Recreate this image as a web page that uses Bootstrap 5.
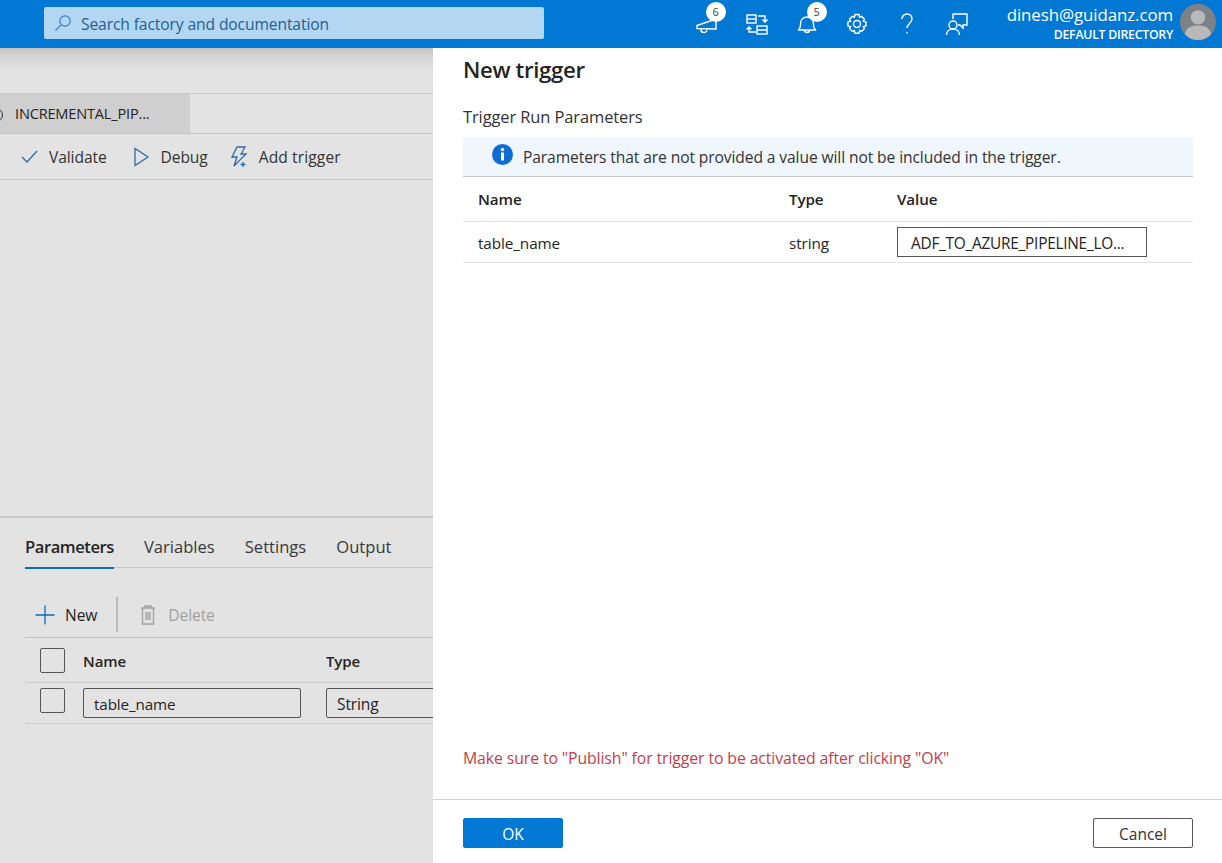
<!doctype html>
<html lang="en"><head><meta charset="utf-8"><title>New trigger</title>
<link rel="stylesheet" href="https://cdn.jsdelivr.net/npm/bootstrap@5.3.0/dist/css/bootstrap.min.css">
<style>
html,body{height:100%;overflow:hidden}
body{font-family:"Open Sans","Liberation Sans",sans-serif;font-size:15px;color:#252423;background:#fff;letter-spacing:-.1px}
.shell{height:863px}
.topbar{height:48px;background:#0078d4;color:#fff;flex:none}
.searchbox{width:500px;height:32px;margin-left:44px;margin-top:-2px;background:#b3d6f2;border-radius:2px;color:#25608f;padding-left:10px;gap:9px;font-size:15.6px}
.searchbox span{padding-top:4px}
.topicons{margin-left:auto;height:48px}
.ticon{width:50px;height:48px;position:relative;display:flex;align-items:center;justify-content:center}
.ticon svg{width:24px;height:24px;fill:none;stroke:#fff;stroke-width:1.4}
.pill{position:absolute;width:20px;height:20px;border-radius:50%;background:#fff;color:#444;font-size:11px;line-height:20px;text-align:center;top:2px;left:24px;letter-spacing:0}
.pill.bell{left:25px}
.who{text-align:right;line-height:1;margin-left:25px;margin-right:7px;margin-top:-2px}
.who .mail{font-size:16.9px;line-height:22px;letter-spacing:-.1px}
.who .dir{font-size:12.3px;font-weight:600;line-height:15px;letter-spacing:-.25px;margin-top:1px}
.avatar{width:36px;height:36px;border-radius:50%;background:#7d8287;overflow:hidden;margin-right:6px;margin-top:-4px;flex:none}
.leftpane{width:433px;flex:none;background:#e3e3e3;position:relative;overflow:hidden}
.shade{height:46px;background:linear-gradient(#c4c4c4,#d4d4d4 8px,#e3e3e3 24px);border-bottom:1px solid #c8c8c8;flex:none}
.tabstrip{height:40px;border-bottom:1px solid #c4c4c4;flex:none}
.pipetab{width:190px;height:39px;background:#cfcfcf;padding-left:15px;font-size:14.6px;letter-spacing:-.2px;position:relative}
.pipetab::before{content:"";position:absolute;left:-11px;top:14px;width:14px;height:14px;border:1.5px solid #333;border-radius:50%}
.cmdbar{height:46px;border-bottom:1px solid #c4c4c4;flex:none;padding-left:20px;padding-top:2px;font-size:15.6px;color:#333}
.cmd{gap:9px;margin-right:24px}
.cmd.dbg{margin-right:22px;gap:10px}
.cmd.trg span{letter-spacing:.1px}
.cmd svg{fill:none;stroke:#2c6ca5;stroke-width:1.3}
.canvasarea{height:336px;flex:none}
.bottompane{border-top:2px solid #c6c6c6;flex:1}
.ptabs{height:50px;border-bottom:1px solid #c8c8c8;margin-left:25px;gap:30px;font-size:16.6px;letter-spacing:0;color:#383838}
.ptab{height:50px;line-height:57px}
.ptab.on{font-weight:600;color:#252423;border-bottom:2px solid #0f6cbd;letter-spacing:-.45px;height:51px;margin-bottom:-1px}
.tools{height:70px;margin-left:25px;border-bottom:1px solid #c0c0c0;padding:29px 0 0 9px;font-size:15.6px}
.toolsep{width:2px;height:35px;background:#bcbcbc;margin:0 20px 0 19px}
.newcmd{height:35px;gap:9px}
.newcmd span,.muted-cmd span{padding-top:2px}
.muted-cmd{color:#a0a0a0;height:35px;gap:10px}
.prow{margin-left:25px;border-bottom:1px solid #cdcdcd;padding-left:15px}
.prow.head{height:45px;font-weight:600}
.prow.head .namecol,.prow.head .tpcol{padding-top:2px}
.prow.body{height:41px}
.fakecheck{width:25px;height:25px;border:1px solid #555;border-radius:2px;flex:none;margin-right:18px}
.prow.body .fakecheck{margin-top:-6px}
.namecol{width:243px;flex:none}
.field{height:30px;border:1px solid #555;border-radius:2px;padding-left:10px;line-height:30px;font-size:15.2px}
.field.nm{width:218px}
.field.tp{width:120px;flex:none;font-size:15.5px}
.rightpane{flex:1;padding-left:30px;padding-right:29px;position:relative;min-width:0}
.rightpane h1{font-size:22.2px;font-weight:600;margin:8px 0 0;line-height:28px;letter-spacing:-.35px}
.subtitle{font-size:16.5px;line-height:22px;margin-top:22px;letter-spacing:-.12px;color:#333}
.notice{height:40px;margin-top:9px;background:#eff6fc;border-bottom:1px solid #c8c8c8;padding-left:29px;gap:10px;font-size:15.6px;color:#333}
.notice span{padding-top:3px}
.notice svg{flex:none;margin-top:-4px}
.trow{border-bottom:1px solid #e1e1e1;padding-left:15px}
.trow.h{height:45px;font-weight:600;font-size:15.2px}
.trow.b{height:41px;font-size:15.3px}
.trow.b .c1,.trow.b .c2{padding-top:2px}
.c1{width:311px;flex:none}.c2{width:108px;flex:none}
.valbox{width:250px;height:30px;border:1px solid #555;padding:0 13px;line-height:31px;white-space:nowrap;font-size:15.4px;letter-spacing:-.25px}
.warnline{color:#c43d4b;font-size:15.8px;letter-spacing:-.1px;margin-top:auto;line-height:20px;margin-bottom:31px}
.footline{margin:0 -29px 0 -30px;height:64px;border-top:1px solid #d2d2d2;padding:18px 29px 0 30px}
.okbtn,.cancelbtn{width:100px;height:30px;border-radius:2px;padding:1px 0 0;font-size:15.5px;line-height:28px;--bs-btn-border-radius:2px}
.okbtn{--bs-btn-bg:#0078d4;--bs-btn-border-color:#0078d4;--bs-btn-color:#fff}
.cancelbtn{--bs-btn-border-color:#555;--bs-btn-color:#333}
</style></head><body>
<div class="shell d-flex flex-column">
 <div class="topbar d-flex align-items-center">
  <div class="searchbox d-flex align-items-center">
   <svg width="18" height="18" viewBox="0 0 18 18" fill="none" stroke="#3a7fb8" stroke-width="1.2"><circle cx="11" cy="7" r="5.2"/><path d="M7.2 10.8 1.5 16.5"/></svg>
   <span>Search factory and documentation</span>
  </div>
  <div class="topicons d-flex align-items-center">
   <div class="ticon"><svg viewBox="0 0 24 24"><path d="M2 13.5 21 7v10L2 16.500z M6 17a3 3 0 0 0 6 1"/></svg><span class="pill">6</span></div>
   <div class="ticon"><svg viewBox="0 0 24 24"><rect x="2" y="3" width="9" height="8"/><path d="M2 7h9"/><rect x="12" y="14" width="10" height="8"/><path d="M12 18h10M13 4h7v6M17.500 7.500 20 10l2.500-2.500M11 20H4v-5M1.500 17.500 4 15l2.500 2.500"/></svg></div>
   <div class="ticon"><svg viewBox="0 0 24 24"><path d="M3 18c2-1 2.500-3 2.500-6 0-4 2.500-7 6.500-7s6.500 3 6.500 7c0 3 .5 5 2.500 6zM9.500 18a2.500 2.500 0 0 0 5 0"/></svg><span class="pill bell">5</span></div>
   <div class="ticon"><svg viewBox="0 0 24 24"><circle cx="12" cy="12" r="3.500"/><path d="M10 2.500h4l.6 2.800 2-.9 2.800 2.800-1.100 2 2.700.8v4l-2.700.7 1.100 2-2.800 2.800-2-1-.6 2.700h-4l-.7-2.700-2 1-2.800-2.800 1.100-2-2.700-.7v-4l2.700-.8-1.100-2 2.800-2.800 2 .9z"/></svg></div>
   <div class="ticon"><svg viewBox="0 0 24 24"><path d="M7 7c0-3 2.300-5 5-5s5 2 5 5c0 4-5 5-5 9M12 20v1.500"/></svg></div>
   <div class="ticon"><svg viewBox="0 0 24 24"><path d="M8 7V2h14v11h-4v3l-3-3h-2"/><circle cx="8" cy="13" r="4"/><path d="M1.500 23c0-4 3-6 6.500-6s6.500 2 6.500 6"/></svg></div>
   <div class="who"><div class="mail">dinesh@guidanz.com</div><div class="dir">DEFAULT DIRECTORY</div></div>
   <div class="avatar"><svg width="36" height="36" viewBox="0 0 35 35"><circle cx="17.500" cy="13" r="7" fill="#b9b9b9"/><path d="M5 29c1-6 6-8 12.500-8S29 23 30 29v6H5z" fill="#b9b9b9"/></svg></div>
  </div>
 </div>
 <div class="d-flex flex-grow-1" style="min-height:0">
  <div class="leftpane d-flex flex-column">
   <div class="shade"></div>
   <div class="tabstrip"><div class="pipetab d-flex align-items-center">INCREMENTAL_PIP...</div></div>
   <div class="cmdbar d-flex align-items-center">
    <div class="cmd d-flex align-items-center"><svg width="20" height="20" viewBox="0 0 20 20"><path d="M2 10l5 5L17 4"/></svg><span>Validate</span></div>
    <div class="cmd dbg d-flex align-items-center"><svg width="20" height="20" viewBox="0 0 20 20"><path d="M4 1.500v17L17 10z"/></svg><span>Debug</span></div>
    <div class="cmd trg d-flex align-items-center"><svg width="20" height="22" viewBox="0 0 20 22"><path d="M7 1h8l-4 7h5L4 20l3-9H2zM13 16v5M10.500 18.500h5"/></svg><span>Add trigger</span></div>
   </div>
   <div class="canvasarea"></div>
   <div class="bottompane">
    <div class="ptabs d-flex"><div class="ptab on">Parameters</div><div class="ptab">Variables</div><div class="ptab">Settings</div><div class="ptab">Output</div></div>
    <div class="tools d-flex align-items-start">
     <div class="newcmd d-flex align-items-center"><svg width="22" height="22" viewBox="0 0 22 22" fill="none" stroke="#0f6cbd" stroke-width="1.3"><path d="M11 1.500v19M1.500 11h19"/></svg><span>New</span></div>
     <div class="toolsep"></div>
     <div class="muted-cmd d-flex align-items-center"><svg width="20" height="22" viewBox="0 0 20 22" fill="none" stroke="#a0a0a0" stroke-width="1.3"><path d="M3 4h14M7 4V2h6v2M4.500 4v16h11V4M8 8v8M10 8v8M12 8v8"/></svg><span>Delete</span></div>
    </div>
    <div class="prow head d-flex align-items-center"><div class="fakecheck"></div><div class="namecol">Name</div><div class="tpcol">Type</div></div>
    <div class="prow body d-flex align-items-center"><div class="fakecheck"></div><div class="namecol"><div class="field nm">table_name</div></div><div class="field tp">String</div></div>
   </div>
  </div>
  <div class="rightpane d-flex flex-column">
   <h1>New trigger</h1>
   <div class="subtitle">Trigger Run Parameters</div>
   <div class="notice d-flex align-items-center">
    <svg width="21" height="21" viewBox="0 0 21 21"><circle cx="10.500" cy="10.500" r="10.500" fill="#0f6cd4"/><circle cx="10.500" cy="5.500" r="1.700" fill="#fff"/><rect x="9" y="8.500" width="3" height="8" fill="#fff"/></svg>
    <span>Parameters that are not provided a value will not be included in the trigger.</span>
   </div>
   <div class="trow h d-flex align-items-center"><div class="c1">Name</div><div class="c2">Type</div><div>Value</div></div>
   <div class="trow b d-flex align-items-center"><div class="c1">table_name</div><div class="c2">string</div><div class="valbox">ADF_TO_AZURE_PIPELINE_LO...</div></div>
   <div class="warnline">Make sure to "Publish" for trigger to be activated after clicking "OK"</div>
   <div class="footline d-flex justify-content-between align-items-start">
    <button type="button" class="btn okbtn">OK</button>
    <button type="button" class="btn cancelbtn">Cancel</button>
   </div>
  </div>
 </div>
</div>
</body></html>
